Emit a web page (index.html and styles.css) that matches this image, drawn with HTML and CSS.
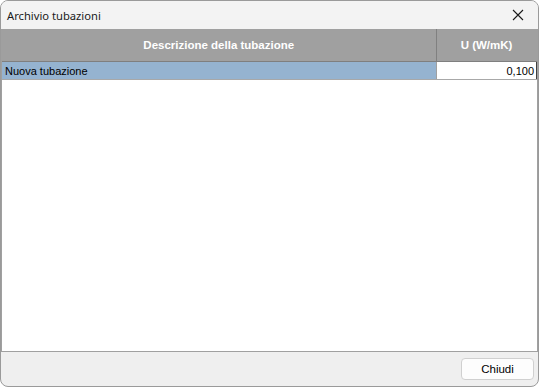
FILE: index.html
```html
<!DOCTYPE html>
<html>
    <head>
        <title>Archivio tubazioni</title>
        <link rel="stylesheet" href="styles.css">
    </head>
    <body>
        <div class="window">
            <header class="titlebar">
                <span class="caption">Archivio tubazioni</span>
                <span class="close">
                    <svg width="12" height="12" viewBox="0 0 12 12">
                        <path d="M1 1 L11 11 M11 1 L1 11" stroke="#1a1a1a" stroke-width="1.1" fill="none"/>
                    </svg>
                </span>
            </header>
            <div class="grid">
                <table>
                    <thead>
                        <tr>
                            <th class="desc">Descrizione della tubazione</th>
                            <th class="val">U (W/mK)</th>
                        </tr>
                    </thead>
                    <tbody>
                        <tr class="selected">
                            <td class="desc">Nuova tubazione</td>
                            <td class="val">0,100</td>
                        </tr>
                    </tbody>
                </table>
            </div>
            <footer class="buttons">
                <button class="btn">Chiudi</button>
            </footer>
        </div>
    </body>
</html>
```

FILE: styles.css
```css
html, body {
    margin: 0;
    height: 100%;
}
body {
    font-family: "Liberation Sans", Arial, sans-serif;
    color: #000;
    background: #fff;
}
.window {
    box-sizing: border-box;
    width: 539px;
    height: 387px;
    border: 1px solid #9a9a9a;
    border-radius: 8px;
    overflow: hidden;
    display: flex;
    flex-direction: column;
    background: #efefef;
}
.titlebar {
    height: 28px;
    flex: none;
    display: flex;
    align-items: center;
    justify-content: space-between;
    background: #f3f3f3;
    padding-left: 6px;
}
.caption {
    font-family: "Noto Sans", sans-serif;
    font-size: 11.2px;
    color: #1a1a1a;
}
.close {
    width: 40px;
    display: flex;
    justify-content: center;
}
.grid {
    flex: 1;
    background: #fff;
    border-left: 1px solid #a0a0a0;
    border-right: 1px solid #a0a0a0;
    border-bottom: 1px solid #a0a0a0;
}
table {
    width: 100%;
    border-collapse: collapse;
    table-layout: fixed;
    font-size: 11px;
}
th {
    height: 32px;
    background: #a0a0a0;
    color: #fff;
    font-weight: bold;
    font-size: 11.5px;
    text-align: center;
    border-bottom: 1px solid #7f7f7f;
    padding: 0;
}
th.val {
    width: 100px;
    border-left: 1px solid #808080;
}
td {
    height: 17px;
    padding: 0 2px;
    border-bottom: 1px solid #a8a8a8;
    white-space: nowrap;
}
tr.selected td.desc {
    background: #95b3d0;
    padding-left: 3px;
}
td.val {
    text-align: right;
    background: #fff;
    border-left: 1px solid #a0a0a0;
    border-right: 1px solid #404040;
}
.buttons {
    height: 34px;
    flex: none;
    display: flex;
    align-items: center;
    justify-content: flex-end;
    padding-right: 4px;
}
.btn {
    width: 73px;
    height: 22px;
    background: #fdfdfd;
    border: 1px solid #d0d0d0;
    border-radius: 4px;
    font-family: "Liberation Sans", Arial, sans-serif;
    font-size: 11.5px;
    color: #000;
    padding: 0;
}
```
